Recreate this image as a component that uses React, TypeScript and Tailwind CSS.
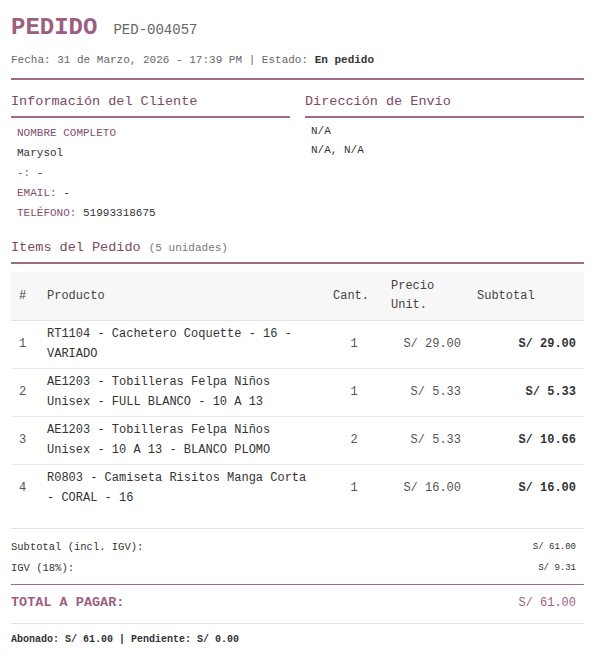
import React from 'react';

interface Item {
  name: string;
  qty: number;
  price: string;
  subtotal: string;
}

const items: Item[] = [
  { name: 'RT1104 - Cachetero Coquette - 16 - VARIADO', qty: 1, price: 'S/ 29.00', subtotal: 'S/ 29.00' },
  { name: 'AE1203 - Tobilleras Felpa Niños Unisex - FULL BLANCO - 10 A 13', qty: 1, price: 'S/ 5.33', subtotal: 'S/ 5.33' },
  { name: 'AE1203 - Tobilleras Felpa Niños Unisex - 10 A 13 - BLANCO PLOMO', qty: 2, price: 'S/ 5.33', subtotal: 'S/ 10.66' },
  { name: 'R0803 - Camiseta Risitos Manga Corta - CORAL - 16', qty: 1, price: 'S/ 16.00', subtotal: 'S/ 16.00' },
];

const App: React.FC = () => {
  return (
    <div className="min-h-screen bg-white px-[11px] pt-[12px] font-['Liberation_Mono',monospace] text-[#333]">
      {/* Cabecera */}
      <div className="border-b-2 border-[#a06b88] pb-[10px]">
        <div className="flex items-baseline gap-4">
          <h1 className="text-[24px] font-bold leading-8 text-[#9b5f82]">PEDIDO</h1>
          <span className="text-[14px] text-[#666]">PED-004057</span>
        </div>
        <p className="mt-2 text-[11px] leading-4 text-[#666]">
          Fecha: 31 de Marzo, 2026 - 17:39 PM | Estado: <span className="font-bold text-[#333]">En pedido</span>
        </p>
      </div>

      {/* Cliente / Envío */}
      <div className="mt-[12px] grid grid-cols-2 gap-[15px]">
        <div>
          <h2 className="border-b-2 border-[#a06b88] pb-[4px] text-[13.5px] leading-5 text-[#7b4a65]">Información del Cliente</h2>
          <div className="mt-[5px] px-[6px] text-[11px] leading-5">
            <div className="text-[#864d6d]">NOMBRE COMPLETO</div>
            <div>Marysol</div>
            <div><span className="text-[#864d6d]">-:</span> -</div>
            <div><span className="text-[#864d6d]">EMAIL:</span> -</div>
            <div><span className="text-[#864d6d]">TELÉFONO:</span> 51993318675</div>
          </div>
        </div>
        <div>
          <h2 className="border-b-2 border-[#a06b88] pb-[4px] text-[13.5px] leading-5 text-[#7b4a65]">Dirección de Envío</h2>
          <div className="mt-[4px] px-[6px] text-[11px] leading-[19px]">
            <div>N/A</div>
            <div>N/A, N/A</div>
          </div>
        </div>
      </div>

      {/* Items */}
      <h2 className="mt-[15px] border-b-2 border-[#a06b88] pb-[4px] text-[13.5px] leading-5 text-[#7b4a65]">
        Items del Pedido <span className="text-[11px] text-[#777]">(5 unidades)</span>
      </h2>

      <table className="mt-2 w-full table-fixed border-collapse text-[12px]">
        <colgroup>
          <col className="w-[28px]" />
          <col className="w-[286px]" />
          <col className="w-[58px]" />
          <col className="w-[86px]" />
          <col className="w-[115px]" />
        </colgroup>
        <thead>
          <tr className="border-b border-[#e3e3e3] bg-[#f7f7f7] text-left text-[#444]">
            <th className="px-2 py-[5px] font-normal leading-[19px]">#</th>
            <th className="px-2 py-[5px] font-normal leading-[19px]">Producto</th>
            <th className="px-2 py-[5px] font-normal leading-[19px]">Cant.</th>
            <th className="px-2 py-[5px] font-normal leading-[19px]">Precio Unit.</th>
            <th className="px-2 py-[5px] font-normal leading-[19px]">Subtotal</th>
          </tr>
        </thead>
        <tbody>
          {items.map((it, i) => (
            <tr key={i} className={i < items.length - 1 ? 'border-b border-[#e8e8e8]' : ''}>
              <td className="px-2 py-1 leading-[19.5px] text-[#555]">{i + 1}</td>
              <td className="px-2 py-1 leading-[19.5px] text-[#333]">{it.name}</td>
              <td className="px-2 py-1 text-center leading-[19.5px] text-[#555]">{it.qty}</td>
              <td className="px-2 py-1 text-right leading-[19.5px] text-[#555]">{it.price}</td>
              <td className="px-2 py-1 text-right font-bold leading-[19.5px] text-[#333]">{it.subtotal}</td>
            </tr>
          ))}
        </tbody>
      </table>

      {/* Totales */}
      <div className="mt-[16px] border-t border-[#e3e3e3] pt-[8px]">
        <div className="border-b border-[#a06b88] pb-[5px]">
          <div className="flex items-center justify-between leading-[21px]">
            <span className="text-[10.5px]">Subtotal (incl. IGV):</span>
            <span className="pr-2 text-[9px]">S/ 61.00</span>
          </div>
          <div className="flex items-center justify-between leading-[21px]">
            <span className="text-[10.5px]">IGV (18%):</span>
            <span className="pr-2 text-[9px]">S/ 9.31</span>
          </div>
        </div>
        <div className="flex items-center justify-between border-b border-[#e3e3e3] pb-[10px] pt-[8px] leading-5 text-[#9b5f82]">
          <span className="text-[13.5px] font-bold">TOTAL A PAGAR:</span>
          <span className="pr-2 text-[12px]">S/ 61.00</span>
        </div>
        <p className="mt-[9px] text-[10px] font-bold leading-[14px] text-[#333]">
          Abonado: S/ 61.00 | Pendiente: S/ 0.00
        </p>
      </div>
    </div>
  );
};

export default App;
